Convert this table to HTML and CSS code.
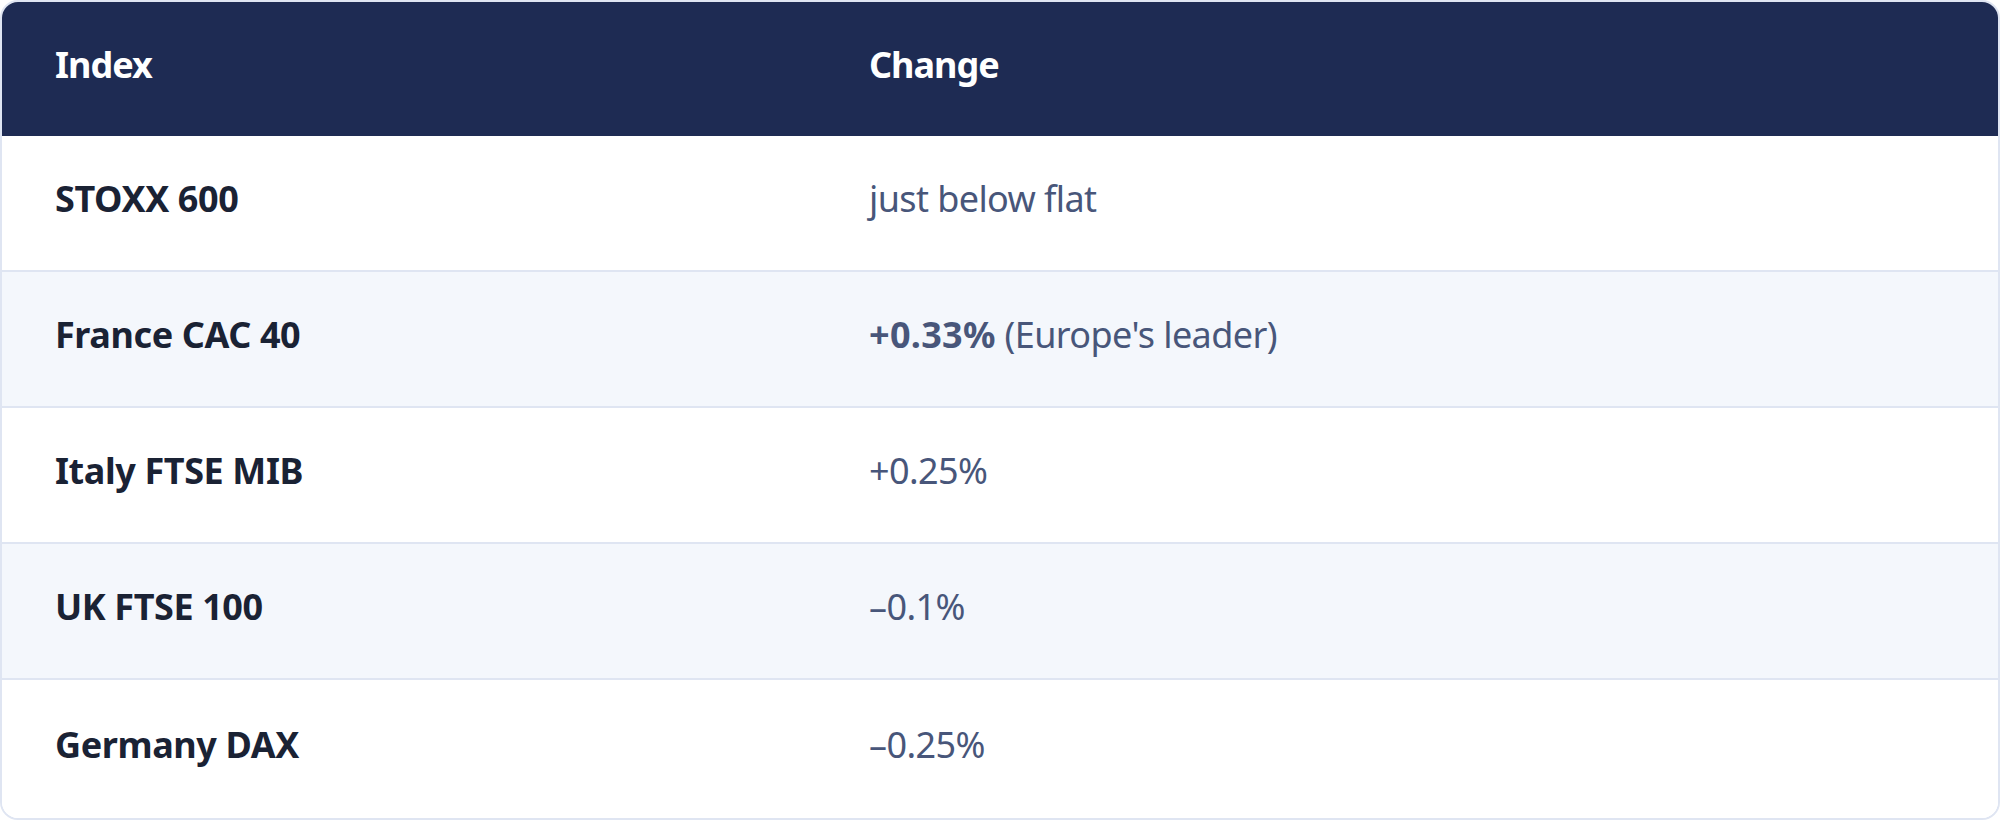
FILE: index.html
```html
<!DOCTYPE html>
<html lang="en">
<head>
<meta charset="utf-8">
<title>European indices</title>
<link rel="stylesheet" href="styles.css">
</head>
<body>
<div class="card">
  <div class="row head">
    <div class="cell">Index</div>
    <div class="cell">Change</div>
  </div>
  <div class="row">
    <div class="cell name">STOXX 600</div>
    <div class="cell val">just below flat</div>
  </div>
  <div class="row alt">
    <div class="cell name">France CAC 40</div>
    <div class="cell val"><strong>+0.33%</strong> (Europe's leader)</div>
  </div>
  <div class="row">
    <div class="cell name">Italy FTSE MIB</div>
    <div class="cell val">+0.25%</div>
  </div>
  <div class="row alt">
    <div class="cell name">UK FTSE 100</div>
    <div class="cell val">–0.1%</div>
  </div>
  <div class="row last">
    <div class="cell name">Germany DAX</div>
    <div class="cell val">–0.25%</div>
  </div>
</div>
</body>
</html>
```
FILE: styles.css
```css
html, body {
  margin: 0;
  padding: 0;
  background: #ffffff;
}
body {
  font-family: "Noto Sans", "Open Sans", sans-serif;
}
.card {
  box-sizing: border-box;
  width: 2000px;
  height: 820px;
  border: 2px solid #dfe5f2;
  border-radius: 18px;
  overflow: hidden;
  display: flex;
  flex-direction: column;
}
.row {
  display: grid;
  grid-template-columns: 814px 1fr;
  height: 134px;
  border-bottom: 2px solid #dfe5f2;
  align-items: center;
  background: #ffffff;
}
.row.alt {
  background: #f4f7fc;
}
.row.last {
  border-bottom: none;
  flex: 1;
}
.row.head {
  background: #1e2b53;
  border-bottom: none;
  height: 134px;
}
.cell {
  padding-left: 53px;
  padding-bottom: 8px;
  font-size: 36px;
  line-height: 1.2;
}
.head .cell {
  color: #ffffff;
  font-weight: 700;
  font-size: 36px;
  letter-spacing: -1px;
}
.name {
  color: #1a2234;
  font-weight: 700;
  letter-spacing: -0.4px;
}
.val {
  color: #48567a;
  letter-spacing: -0.6px;
}
.val strong {
  font-weight: 700;
  letter-spacing: 0.3px;
}
```
